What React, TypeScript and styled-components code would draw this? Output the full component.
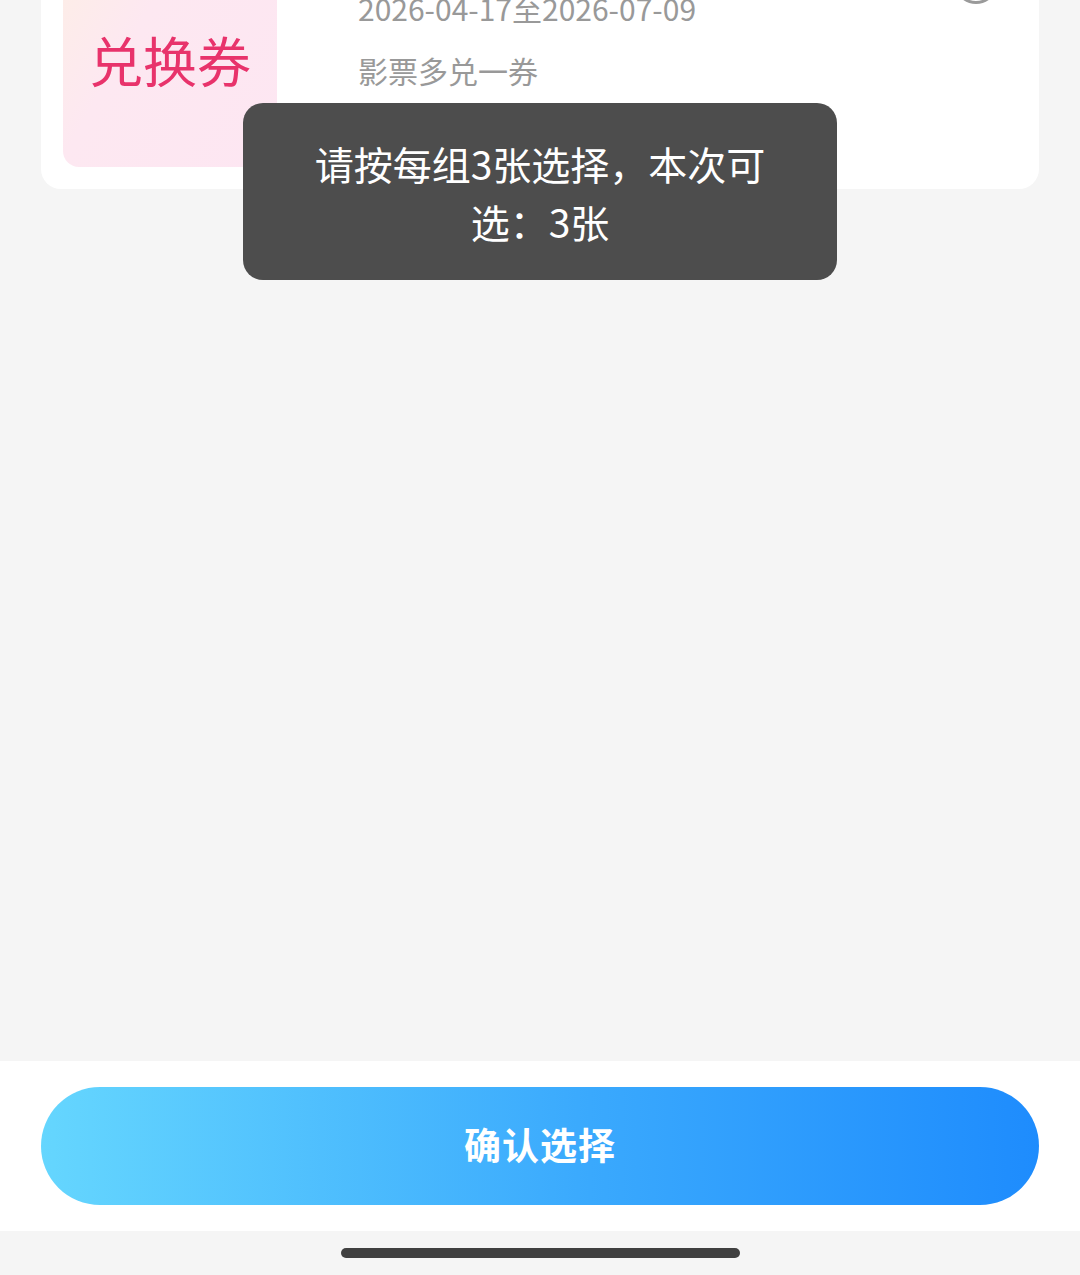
import { FC } from 'react';
import styled, { createGlobalStyle } from 'styled-components';

const GlobalStyle = createGlobalStyle`
  html, body {
    margin: 0;
    padding: 0;
    background: #f5f5f5;
    font-family: "Noto Sans CJK SC", "Noto Sans", sans-serif;
  }
  * { box-sizing: border-box; }
`;

const Page = styled.div`
  position: relative;
  display: flex;
  flex-direction: column;
  height: 1275px;
  overflow: hidden;
  background: #f5f5f5;
`;

const List = styled.div`
  flex: 1;
  padding: 0 41px;
  margin-top: -69px;
`;

const Card = styled.div`
  display: flex;
  background: #fff;
  border-radius: 20px;
  padding: 22px;
`;

const Cover = styled.div`
  flex: none;
  width: 214px;
  height: 214px;
  border-radius: 16px;
  background: linear-gradient(120deg, #fdeee6 0%, #fde8f1 35%, #fde6f2 100%);
  display: flex;
  align-items: center;
  justify-content: center;
  color: #e8336b;
  font-size: 54px;
  line-height: 1;
`;

const Info = styled.div`
  flex: 1;
  display: flex;
  flex-direction: column;
  gap: 20px;
  padding-top: 34px;
  margin-left: 81px;
  color: #999;
  font-size: 30px;
  line-height: 42px;
`;

const Radio = styled.div`
  flex: none;
  width: 44px;
  height: 44px;
  margin: 7px 19px 0 0;
  border: 3px solid #9a9a9a;
  border-radius: 50%;
`;

const Footer = styled.div`
  background: #fff;
  padding: 26px 41px;
`;

const ConfirmButton = styled.button`
  display: block;
  width: 100%;
  height: 118px;
  padding: 0 0 4px;
  border: none;
  border-radius: 59px;
  background: linear-gradient(90deg, #65d6fe 0%, #3aa9fd 55%, #1e8cfd 100%);
  color: #fff;
  font-family: inherit;
  font-size: 37px;
  font-weight: 700;
  letter-spacing: 1px;
`;

const HomeArea = styled.div`
  height: 44px;
  display: flex;
  justify-content: center;
  padding-top: 17px;
`;

const HomeBar = styled.div`
  width: 399px;
  height: 10px;
  border-radius: 5px;
  background: #404040;
`;

const Toast = styled.div`
  position: absolute;
  top: 103px;
  left: 50%;
  transform: translateX(-50%);
  width: 594px;
  padding: 31px 54px 30px;
  border-radius: 20px;
  background: #4d4d4d;
  color: #fff;
  font-size: 39px;
  line-height: 58px;
  text-align: center;
`;

const App: FC = () => {
  return <>
    <GlobalStyle />
    <Page>
      <List>
        <Card>
          <Cover>兑换券</Cover>
          <Info>
            <div>2026-04-17至2026-07-09</div>
            <div>影票多兑一券</div>
          </Info>
          <Radio />
        </Card>
      </List>
      <Footer>
        <ConfirmButton>确认选择</ConfirmButton>
      </Footer>
      <HomeArea>
        <HomeBar />
      </HomeArea>
      <Toast>请按每组3张选择，本次可选：3张</Toast>
    </Page>
  </>
}

export default App;
